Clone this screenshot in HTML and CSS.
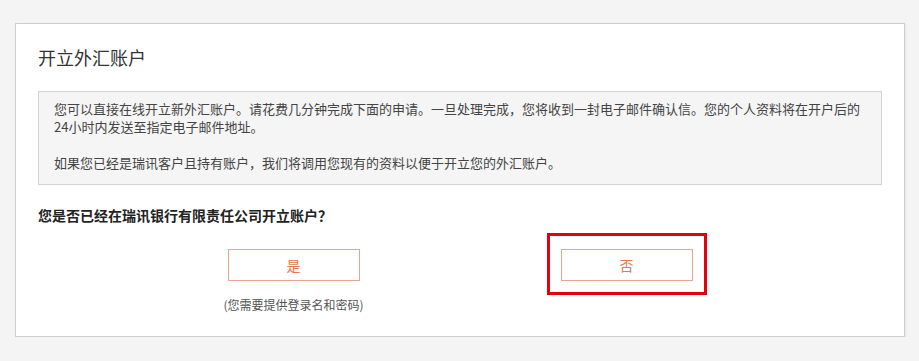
FILE: index.html
```html
<!DOCTYPE html>
<html lang="zh-CN">
<head>
    <meta charset="UTF-8">
    <meta name="viewport" content="width=device-width, initial-scale=1.0">
    <title>开立外汇账户</title>
    <link rel="stylesheet" href="styles.css">
</head>
<body>
    <div class="panel">
        <h2 class="panel-title">开立外汇账户</h2>

        <div class="notice">
            <p>您可以直接在线开立新外汇账户。请花费几分钟完成下面的申请。一旦处理完成，您将收到一封电子邮件确认信。您的个人资料将在开户后的24小时内发送至指定电子邮件地址。</p>
            <p>如果您已经是瑞讯客户且持有账户，我们将调用您现有的资料以便于开立您的外汇账户。</p>
        </div>

        <p class="question">您是否已经在瑞讯银行有限责任公司开立账户？</p>

        <div class="choices">
            <div class="choice">
                <button class="choice-button">是</button>
                <span class="choice-hint">(您需要提供登录名和密码)</span>
            </div>
            <div class="choice">
                <div class="highlight">
                    <button class="choice-button">否</button>
                </div>
            </div>
        </div>
    </div>
</body>
</html>
```

FILE: styles.css
```css
* {
    margin: 0;
    padding: 0;
    box-sizing: border-box;
}

body {
    font-family: "Noto Sans CJK SC", "Liberation Sans", sans-serif;
    background: #f4f4f4;
    color: #333;
    padding: 23px 14px 0 15px;
}

.panel {
    background: #fff;
    border: 1px solid #cfcfcf;
    box-shadow: 1px 1px 2px rgba(0, 0, 0, 0.06);
    padding: 21px 22px 22px;
}

.panel-title {
    font-size: 18px;
    font-weight: normal;
    line-height: 24px;
    color: #333;
    margin-bottom: 22px;
}

.notice {
    background: #f5f5f5;
    border: 1px solid #d3d3d3;
    padding: 8px 15px 12px;
    font-size: 13px;
    line-height: 18px;
    color: #444;
}

.notice p + p {
    margin-top: 18px;
}

.question {
    margin-top: 20px;
    font-size: 14px;
    line-height: 20px;
    font-weight: bold;
    color: #222;
}

.choices {
    display: flex;
    justify-content: center;
    margin-top: 24px;
}

.choice {
    width: 333px;
    display: flex;
    flex-direction: column;
    align-items: center;
}

.choice-button {
    width: 132px;
    height: 32px;
    background: #fff;
    border: 1px solid #eaa58f;
    color: #e5774f;
    font-family: inherit;
    font-size: 14px;
    cursor: pointer;
}

.choice-hint {
    margin-top: 15px;
    font-size: 12px;
    line-height: 18px;
    color: #555;
}

.highlight {
    position: relative;
}

.highlight::after {
    content: "";
    position: absolute;
    top: -16px;
    left: -14px;
    right: -14px;
    bottom: -14px;
    border: 3px solid #e3000f;
    pointer-events: none;
}
```
